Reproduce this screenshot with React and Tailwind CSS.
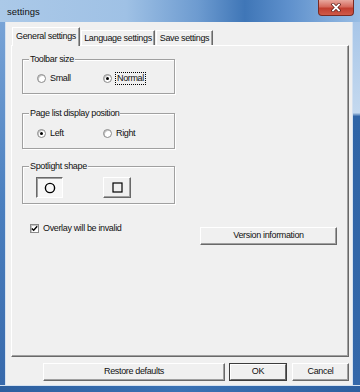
import React from "react";

const btn =
  "h-[18px] bg-[#f0f0f0] border-t border-l border-white border-r border-b border-r-[#696969] border-b-[#696969] shadow-[inset_-1px_-1px_0_#a0a0a0] flex items-center justify-center";

function Radio({ checked }) {
  return (
    <span className="w-[9px] h-[9px] rounded-full bg-white border border-[#8a8a8a] shadow-[inset_1px_1px_0_#c4c4c4] flex items-center justify-center shrink-0">
      {checked && <span className="w-[3px] h-[3px] rounded-full bg-black" />}
    </span>
  );
}

function Group({ label, className, children }) {
  return (
    <div
      className={`relative w-[153px] border border-[#a0a0a0] shadow-[inset_1px_1px_0_#fff,1px_1px_0_#fff] ${className}`}
    >
      <span className="absolute left-[6px] top-[-6px] px-[1px] bg-[#f0f0f0] leading-[11px]">
        {label}
      </span>
      {children}
    </div>
  );
}

const App = () => {
  return (
    <div className="w-[360px] h-[392px] flex flex-col font-['Liberation_Sans',Arial,sans-serif] text-[9px] tracking-[-0.35px] text-[#111] bg-[linear-gradient(180deg,#8fb5e0_0%,#5d8fca_40%,#3a6fb2_100%)]">
      {/* title bar */}
      <div className="h-[22px] shrink-0 flex items-start justify-between bg-[linear-gradient(90deg,#abc9e8_0%,#9fc1e5_35%,#6d9bd0_55%,#3f76b7_68%,#5e90cc_80%,#98bde4_100%)]">
        <span className="pl-[7px] pt-[6px] text-[9.5px] tracking-normal leading-[12px] text-[#111]">
          settings
        </span>
        <div className="mr-[6px] w-[36px] h-[16px] rounded-b-[4px] border border-t-0 border-[#7a2a22] bg-[linear-gradient(180deg,#e8a89e_0%,#d5695c_45%,#c13e2f_55%,#cf5a48_100%)] flex items-center justify-center">
          <svg width="10" height="9" viewBox="0 0 10 9">
            <path d="M2 1.5 L8 7.5 M8 1.5 L2 7.5" stroke="#5a1a14" strokeWidth="3.2" strokeLinecap="square" />
            <path d="M2 1.5 L8 7.5 M8 1.5 L2 7.5" stroke="#fff" strokeWidth="1.8" strokeLinecap="square" />
          </svg>
        </div>
      </div>

      <div className="flex flex-1">
        <div className="w-[6px] border-r border-[#d4e1f0] bg-[linear-gradient(180deg,#78a3d6_0%,#4a7fbf_50%,#3769ab_100%)]" />

        {/* client */}
        <div className="flex-1 bg-[#f0f0f0] flex flex-col pl-[5px] pt-[6px]">
          {/* tabs */}
          <div className="flex items-end h-[17px] pl-[1px]">
            <div className="relative z-10 h-[19px] -mb-[1px] w-[68px] bg-[#f0f0f0] border-l border-t border-white border-r border-r-[#696969] shadow-[inset_-1px_0_0_#a0a0a0] flex items-start justify-center pt-[3px] leading-[11px]">
              General settings
            </div>
            <div className="h-[15px] w-[74px] ml-[1px] border-l border-t border-white border-r border-r-[#696969] shadow-[inset_-1px_0_0_#a0a0a0] flex items-center justify-center leading-[11px]">
              Language settings
            </div>
            <div className="h-[15px] w-[57px] ml-[1px] border-l border-t border-white border-r border-r-[#696969] shadow-[inset_-1px_0_0_#a0a0a0] flex items-center justify-center leading-[11px]">
              Save settings
            </div>
          </div>

          {/* panel */}
          <div className="w-[338px] h-[312px] border-l border-t border-white border-r border-b border-r-[#696969] border-b-[#696969]">
            <div className="h-full border-r border-b border-[#a0a0a0] pl-[10px] pt-[13px] flex flex-col">
              <Group label="Toolbar size" className="h-[35px]">
                <div className="flex items-center pl-[14px] pt-[12px] leading-[11px]">
                  <div className="w-[66px] flex items-center gap-[4px]">
                    <Radio />
                    <span>Small</span>
                  </div>
                  <div className="flex items-center gap-[3px]">
                    <Radio checked />
                    <span className="border border-dotted border-black px-[1px] leading-[11px]">Normal</span>
                  </div>
                </div>
              </Group>

              <Group label="Page list display position" className="h-[36px] mt-[19px]">
                <div className="flex items-center pl-[14px] pt-[14px] leading-[11px]">
                  <div className="w-[66px] flex items-center gap-[4px]">
                    <Radio checked />
                    <span>Left</span>
                  </div>
                  <div className="flex items-center gap-[4px]">
                    <Radio />
                    <span>Right</span>
                  </div>
                </div>
              </Group>

              <Group label="Spotlight shape" className="h-[38px] mt-[17px]">
                <div className="flex pl-[13px] pt-[10px] gap-[40px]">
                  <div className="w-[27px] h-[21px] bg-[#f7f7f7] border-t border-l border-[#696969] border-r border-b border-r-white border-b-white shadow-[inset_1px_1px_0_#a0a0a0] flex items-center justify-center">
                    <svg width="12" height="12" viewBox="0 0 12 12">
                      <circle cx="6" cy="6" r="4.6" fill="none" stroke="#000" strokeWidth="1.4" />
                    </svg>
                  </div>
                  <div className="w-[28px] h-[21px] bg-[#f0f0f0] border-t border-l border-white border-r border-b border-r-[#696969] border-b-[#696969] shadow-[inset_-1px_-1px_0_#a0a0a0] flex items-center justify-center">
                    <svg width="11" height="11" viewBox="0 0 11 11">
                      <rect x="1" y="1" width="9" height="9" fill="none" stroke="#000" strokeWidth="1.2" />
                    </svg>
                  </div>
                </div>
              </Group>

              <div className="flex items-start mt-[19px]">
                <div className="flex items-center gap-[4px] ml-[8px] leading-[10px]">
                  <span className="w-[9px] h-[9px] bg-white border border-[#8a8a8a] shadow-[inset_1px_1px_0_#c4c4c4] flex items-center justify-center">
                    <svg width="7" height="7" viewBox="0 0 7 7">
                      <path d="M0.8 3.4 L2.7 5.3 L6.2 1.3" fill="none" stroke="#000" strokeWidth="1.4" />
                    </svg>
                  </span>
                  <span>Overlay will be invalid</span>
                </div>
                <div className={`${btn} w-[137px] ml-auto mr-[10px] mt-[4px]`}>Version information</div>
              </div>
            </div>
          </div>

          {/* bottom buttons */}
          <div className="flex mt-[6px] pl-[32px]">
            <div className={`${btn} w-[182px]`}>Restore defaults</div>
            <div className="ml-[4px] w-[58px] h-[18px] border border-[#3c3c3c]">
              <div className="h-full bg-[#f0f0f0] border-t border-l border-white border-r border-b border-r-[#696969] border-b-[#696969] flex items-center justify-center">
                OK
              </div>
            </div>
            <div className={`${btn} w-[57px] ml-[5px]`}>Cancel</div>
          </div>
        </div>

        <div className="w-[8px] border-l border-[#d4e1f0] bg-[linear-gradient(180deg,#a8c6e8_0%,#c4d9ef_25%,#2f64a6_26%,#3468aa_100%)]" />
      </div>
      <div className="h-[7px] shrink-0 border-t border-[#d4e1f0] bg-[linear-gradient(90deg,#2d5f9f_0%,#3a72b4_50%,#2d5f9f_100%)]" />
    </div>
  );
};

export default App;
